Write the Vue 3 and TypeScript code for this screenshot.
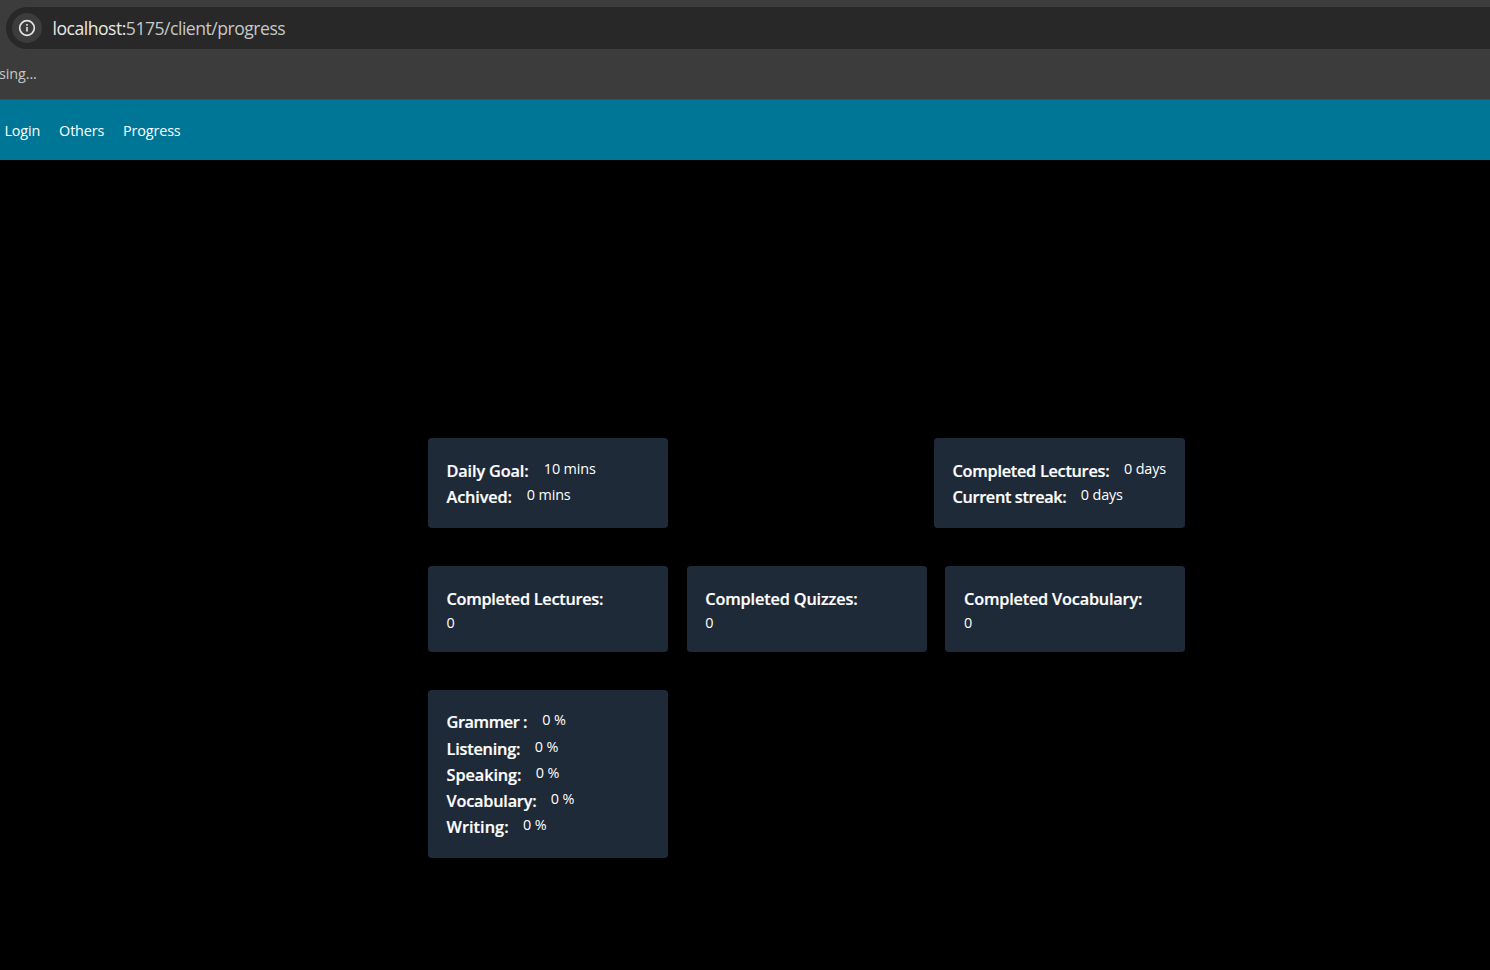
<script setup lang="ts">
interface Stat {
  label: string
  value: string
  width: number
  tracking: number
}

const links = ['Login', 'Others', 'Progress']

const goals: Stat[] = [
  { label: 'Daily Goal:', value: '10 mins', width: 82.3, tracking: -0.15 },
  { label: 'Achived:', value: '0 mins', width: 65.3, tracking: -0.14 },
]
const streaks: Stat[] = [
  { label: 'Completed Lectures:', value: '0 days', width: 156.5, tracking: -0.27 },
  { label: 'Current streak:', value: '0 days', width: 113.3, tracking: -0.35 },
]
const totals: Stat[] = [
  { label: 'Completed Lectures:', value: '0', width: 157, tracking: -0.28 },
  { label: 'Completed Quizzes:', value: '0', width: 153, tracking: -0.16 },
  { label: 'Completed Vocabulary:', value: '0', width: 179, tracking: -0.2 },
]
const skills: Stat[] = [
  { label: 'Grammer :', value: '0 %', width: 80.7, tracking: -0.43 },
  { label: 'Listening:', value: '0 %', width: 73.3, tracking: -0.22 },
  { label: 'Speaking:', value: '0 %', width: 74.3, tracking: -0.08 },
  { label: 'Vocabulary:', value: '0 %', width: 89.3, tracking: -0.22 },
  { label: 'Writing:', value: '0 %', width: 61.5, tracking: 0.04 },
]

const labelStyle = (s: Stat) => ({
  width: s.width + 'px',
  letterSpacing: s.tracking + 'px',
})
</script>

<template>
  <div class="window">
    <header class="chrome">
      <div class="address">
        <span class="info">
          <svg width="18" height="18" viewBox="0 0 18 18" fill="none">
            <circle cx="9" cy="9" r="7.3" stroke="#e3e3e3" stroke-width="1.7" />
            <path d="M9 8v4.6M9 5.1v1.7" stroke="#e3e3e3" stroke-width="1.6" />
          </svg>
        </span>
        <span class="url"><b>localhost:</b>5175/client/progress</span>
      </div>
      <div class="bookmarks"><span>sing...</span></div>
    </header>
    <nav class="nav">
      <a v-for="link in links" :key="link">{{ link }}</a>
    </nav>
    <main class="board">
      <section class="row between">
        <article class="card">
          <div v-for="s in goals" :key="s.label" class="stat">
            <h5 :style="labelStyle(s)">{{ s.label }}</h5>
            <p>{{ s.value }}</p>
          </div>
        </article>
        <article class="card wide">
          <div v-for="s in streaks" :key="s.label" class="stat">
            <h5 :style="labelStyle(s)">{{ s.label }}</h5>
            <p>{{ s.value }}</p>
          </div>
        </article>
      </section>
      <section class="row">
        <article v-for="s in totals" :key="s.label" class="card total">
          <h5 :style="labelStyle(s)">{{ s.label }}</h5>
          <p>{{ s.value }}</p>
        </article>
      </section>
      <section class="row">
        <article class="card skills">
          <div v-for="s in skills" :key="s.label" class="stat">
            <h5 :style="labelStyle(s)">{{ s.label }}</h5>
            <p>{{ s.value }}</p>
          </div>
        </article>
      </section>
    </main>
  </div>
</template>

<style>
body {
  margin: 0;
  background: #000;
}
</style>

<style scoped>
.window {
  width: 1490px;
  height: 970px;
  overflow: hidden;
  background: #000;
  color: #fff;
  font-family: "Open Sans", "Noto Sans", sans-serif;
  font-size: 14.4px;
}
.chrome {
  box-sizing: border-box;
  height: 99px;
  padding-top: 7px;
  background: #3c3c3c;
}
.address {
  display: flex;
  align-items: center;
  height: 42px;
  margin-left: 6px;
  padding-left: 6px;
  border-radius: 21px 0 0 21px;
  background: #282828;
}
.info {
  display: flex;
  align-items: center;
  justify-content: center;
  width: 30px;
  height: 30px;
  border-radius: 50%;
  background: #3c3c3c;
}
.url {
  margin-left: 10.5px;
  font-size: 17.6px;
  letter-spacing: -0.5px;
  color: #c7c7c7;
  white-space: nowrap;
}
.url b {
  font-weight: 400;
  color: #e8e8e8;
}
.bookmarks {
  display: flex;
  align-items: center;
  height: 48px;
  color: #c7c7c7;
  letter-spacing: -0.1px;
}
.bookmarks span {
  margin-left: -1px;
}
.nav {
  display: flex;
  align-items: center;
  gap: 18.9px;
  box-sizing: border-box;
  height: 61px;
  padding-left: 4.5px;
  border-top: 1px solid #30505c;
  background: #007697;
  letter-spacing: -0.15px;
}
.board {
  display: flex;
  flex-direction: column;
  gap: 37.5px;
  width: 757.5px;
  margin: 278.4px 0 0 427.8px;
}
.row {
  display: flex;
  gap: 18.75px;
}
.between {
  justify-content: space-between;
}
.card {
  box-sizing: border-box;
  width: 240px;
  padding: 19.25px 18.75px 18.25px;
  border-radius: 3.75px;
  background: #1f2a39;
}
.wide {
  width: 251.5px;
}
.total {
  padding-top: 20px;
  padding-bottom: 17.5px;
}
.skills {
  padding-top: 19.8px;
  padding-bottom: 17.7px;
}
.stat {
  display: flex;
  gap: 15px;
}
h5 {
  flex: none;
  margin: 0;
  font-size: 16.3px;
  font-weight: 600;
  line-height: 26.25px;
  white-space: nowrap;
  -webkit-text-stroke: 0.2px #fff;
}
p {
  margin: 0;
  line-height: 22.5px;
  letter-spacing: -0.15px;
  white-space: nowrap;
}
</style>
